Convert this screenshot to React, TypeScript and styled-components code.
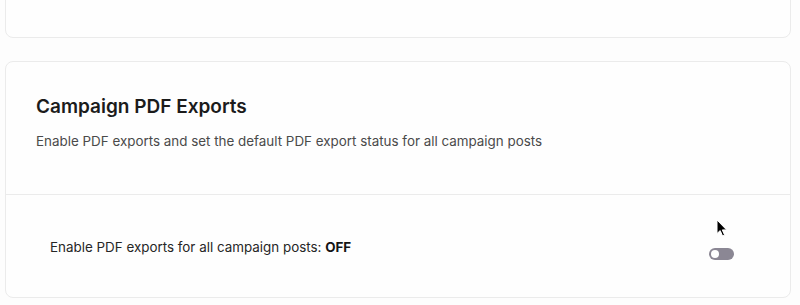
import React from "react";
import styled, { createGlobalStyle } from "styled-components";

const Global = createGlobalStyle`
  html, body { margin: 0; padding: 0; background: #fdfdfd; }
  body { font-family: Inter, "Noto Sans", "Liberation Sans", sans-serif; overflow: hidden; }
  * { box-sizing: border-box; }
`;

const Page = styled.div`
  position: relative;
  display: flex;
  flex-direction: column;
  gap: 23px;
  padding: 0 9px 0 5px;
  height: 305px;
  overflow: hidden;
`;

const Card = styled.section<{ $clipped?: boolean }>`
  background: #fefefe;
  border: 1px solid #ebebeb;
  border-radius: 8px;
  margin-top: ${(p) => (p.$clipped ? "-22px" : "0")};
  height: ${(p) => (p.$clipped ? "60px" : "auto")};
`;

const Header = styled.div`
  padding: 31px 30px 43px;
  border-bottom: 1px solid #ebebeb;
`;

const Title = styled.h2`
  margin: 0;
  font-size: 19px;
  line-height: 28px;
  font-weight: 600;
  color: #1b1b1b;
`;

const Description = styled.p`
  margin: 10px 0 0;
  font-size: 13.4px;
  line-height: 20px;
  color: #4a4a4a;
`;

const Row = styled.div`
  display: flex;
  align-items: center;
  justify-content: space-between;
  height: 102px;
  padding: 2px 56px 0 44px;
`;

const Label = styled.span`
  font-size: 13.4px;
  line-height: 20px;
  color: #262626;
  b { font-weight: 700; color: #141414; }
`;

const Toggle = styled.button<{ $on: boolean }>`
  position: relative;
  width: 25px;
  height: 12px;
  margin-top: 13px;
  padding: 0;
  border: none;
  border-radius: 6px;
  background: ${(p) => (p.$on ? "#6b4bd6" : "#8b8794")};
  cursor: pointer;
  &::after {
    content: "";
    position: absolute;
    top: 2px;
    left: ${(p) => (p.$on ? "15px" : "2px")};
    width: 8px;
    height: 8px;
    border-radius: 50%;
    background: #ffffff;
  }
`;

const Cursor = styled.svg`
  position: absolute;
  left: 716px;
  top: 219px;
  pointer-events: none;
`;

export default function App() {
  const [on, setOn] = React.useState(false);
  return (
    <>
      <Global />
      <Page>
        <Card $clipped />
        <Card>
          <Header>
            <Title>Campaign PDF Exports</Title>
            <Description>
              Enable PDF exports and set the default PDF export status for all campaign posts
            </Description>
          </Header>
          <Row>
            <Label>
              Enable PDF exports for all campaign posts: <b>{on ? "ON" : "OFF"}</b>
            </Label>
            <Toggle $on={on} onClick={() => setOn(!on)} aria-label="Toggle PDF exports" />
          </Row>
        </Card>
        <Cursor width="12" height="18" viewBox="0 0 12 18">
          <path d="M1 1 L1 14.5 L4.2 11.6 L6.6 17 L8.6 16.1 L6.3 10.9 L10.6 10.9 Z" fill="#000" stroke="#fff" strokeWidth="1" strokeLinejoin="round" />
        </Cursor>
      </Page>
    </>
  );
}
